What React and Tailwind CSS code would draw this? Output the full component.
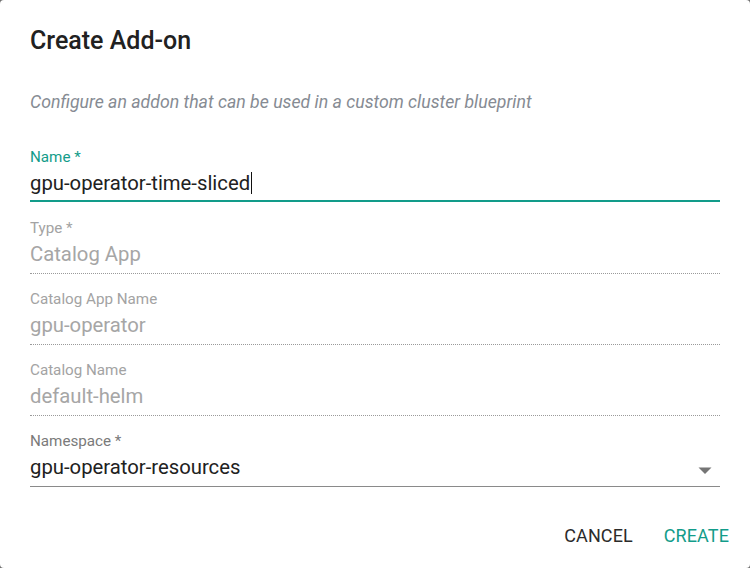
import React from "react";

function Field({ label, value, disabled, focused, select, cursor }) {
  const labelColor = focused ? "text-[#129c8a]" : disabled ? "text-[#a3a3a3]" : "text-[#7a7a7a]";
  const valueColor = disabled ? "text-[#a6a6a6]" : "text-[#212121]";
  const border = focused
    ? "h-[35px] border-b-2 border-solid border-[#129c8a]"
    : disabled
    ? "h-[36px] border-b border-dotted border-[#9a9a9a]"
    : "h-[36px] border-b border-solid border-[#8a8a8a]";
  return (
    <div className={focused ? "mb-[16px]" : "mb-[15px]"}>
      <div className={`h-[20px] text-[15.2px] leading-[20px] ${labelColor}`}>{label}</div>
      <div className={`relative flex items-start ${border}`}>
        <span className={`text-[20.3px] leading-[32px] ${valueColor}`}>{value}</span>
        {cursor && <span className="ml-[1px] mt-[5px] h-[22px] w-[1px] bg-[#111]" />}
        {select && (
          <svg className="absolute right-[8px] top-[16px]" width="14" height="8" viewBox="0 0 14 8">
            <polygon points="0.5,0.5 13.5,0.5 7,7" fill="#757575" />
          </svg>
        )}
      </div>
    </div>
  );
}

export default function App() {
  return (
    <div className="w-[750px] h-[568px] bg-[#6f6f6f]" style={{ fontFamily: "Roboto, 'Noto Sans', sans-serif" }}>
      <div className="w-full h-full bg-white rounded-[4px] flex flex-col">
        <div className="px-[30px] pt-[26px]">
          <h2 className="text-[25px] leading-[30px] font-medium text-[#212121]">Create Add-on</h2>
          <p className="mt-[34px] text-[17.7px] leading-[24px] italic text-[#868b93]">
            Configure an addon that can be used in a custom cluster blueprint
          </p>
          <div className="mt-[33px]">
            <Field label="Name *" value="gpu-operator-time-sliced" focused cursor />
            <Field label="Type *" value="Catalog App" disabled />
            <Field label="Catalog App Name" value="gpu-operator" disabled />
            <Field label="Catalog Name" value="default-helm" disabled />
            <Field label="Namespace *" value="gpu-operator-resources" select />
          </div>
        </div>
        <div className="flex justify-end items-center gap-[31px] pr-[21px] mt-[22px]">
          <button className="text-[18px] leading-[24px] text-[#2b2b2b] tracking-[0.1px]">CANCEL</button>
          <button className="text-[18px] leading-[24px] text-[#129c8a] tracking-[0.1px]">CREATE</button>
        </div>
      </div>
    </div>
  );
}
